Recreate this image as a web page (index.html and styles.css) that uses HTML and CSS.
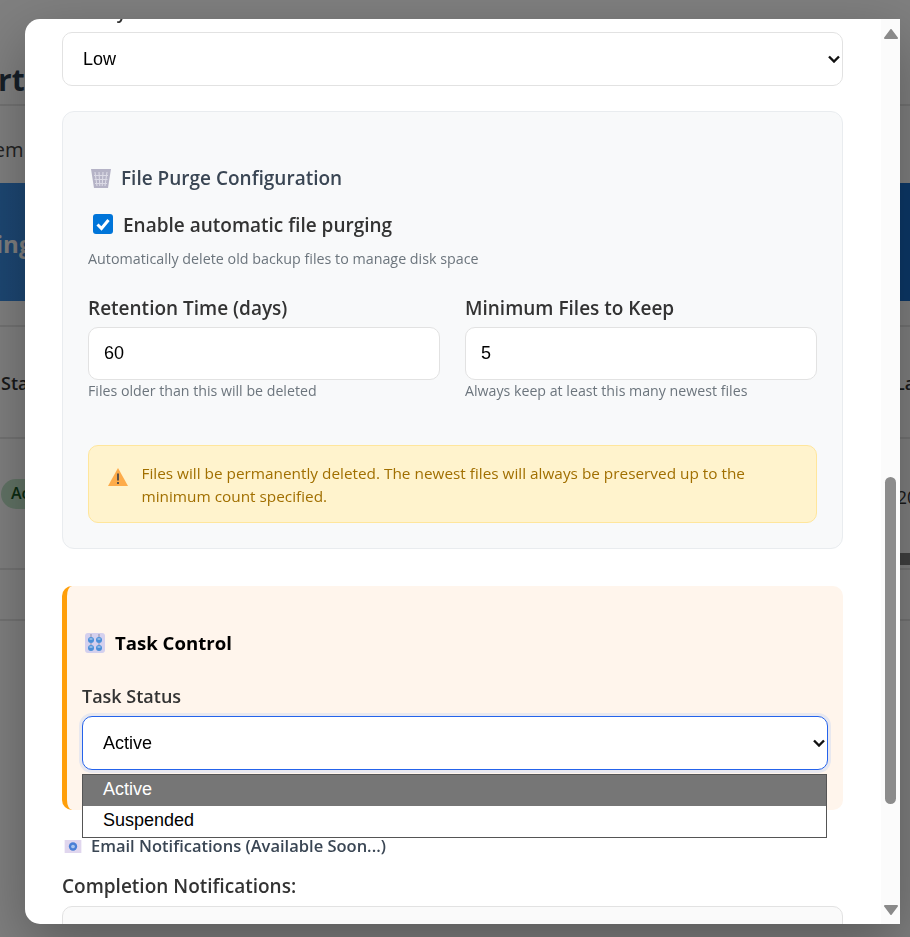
FILE: index.html
```html
<!DOCTYPE html>
<html lang="en">
<head>
    <meta charset="UTF-8">
    <meta name="viewport" content="width=device-width, initial-scale=1.0">
    <title>Task Settings</title>
    <link rel="stylesheet" href="styles.css">
</head>
<body>

    <div class="page">
        <div class="page-head"><h1>Reports</h1></div>
        <div class="page-sub">System</div>
        <div class="banner"><span>Scheduling</span></div>
        <div class="table-head"><span>Status</span><span>Last</span></div>
        <div class="table-row">
            <div class="row-cells"><span class="pill">Active</span><span class="date">2025</span></div>
            <div class="table-bar"></div>
        </div>
        <div class="table-foot"></div>
    </div>

    <div class="overlay"></div>

    <div class="modal">
        <div class="modal-body">
            <label class="field-label clipped">Priority</label>
            <div class="select-box">Low<svg class="chev" viewBox="0 0 12 8"><path d="M1 1.500 6 6.500l5-5" /></svg></div>

            <div class="purge">
                <h4 class="purge-title">
                    <svg class="emoji" viewBox="0 0 20 20">
                        <path d="M0 1h20l-3 19H3z" fill="#b5b3c6"/>
                        <path d="M4 4l2 14M8 4l.8 14M12 4l-.8 14M16 4l-2 14M3 7.500h14M3.500 11.500h13M4 15.500h12" stroke="#dcdbe6" stroke-width="1.1" fill="none"/>
                    </svg>
                    File Purge Configuration
                </h4>
                <div class="check-row">
                    <span class="check"><svg viewBox="0 0 20 20"><path d="M4.500 10.500 8.500 14.500 15.500 6" /></svg></span>
                    <span>Enable automatic file purging</span>
                </div>
                <p class="hint hint-main">Automatically delete old backup files to manage disk space</p>

                <div class="purge-grid">
                    <div>
                        <label class="field-label">Retention Time (days)</label>
                        <div class="input-box">60</div>
                        <p class="hint">Files older than this will be deleted</p>
                    </div>
                    <div>
                        <label class="field-label">Minimum Files to Keep</label>
                        <div class="input-box">5</div>
                        <p class="hint">Always keep at least this many newest files</p>
                    </div>
                </div>

                <div class="warning">
                    <svg class="warn-icon" viewBox="0 0 20 18">
                        <path d="M10 0 20 18H0z" fill="#fdab4a"/>
                        <path d="M10 5.500v7" stroke="#5c5248" stroke-width="2"/>
                        <path d="M10 14v2" stroke="#5c5248" stroke-width="2"/>
                    </svg>
                    <p>Files will be permanently deleted. The newest files will always be preserved up to the minimum count specified.</p>
                </div>
            </div>

            <div class="task-control">
                <h4 class="task-title">
                    <svg class="emoji" viewBox="0 0 20 20">
                        <rect width="20" height="20" rx="3" fill="#d4d0ee"/>
                        <path d="M6 1v3M14 1v3M6 10v2M14 10v2" stroke="#8f8fa8"/>
                        <circle cx="6" cy="7" r="3" fill="#4a8fd8"/><circle cx="14" cy="7" r="3" fill="#4a8fd8"/>
                        <circle cx="6" cy="15" r="3" fill="#4a8fd8"/><circle cx="14" cy="15" r="3" fill="#4a8fd8"/>
                        <path d="M4.500 6h3M12.500 6h3M4.500 14h3M12.500 14h3" stroke="#cfe0f4"/>
                    </svg>
                    Task Control
                </h4>
                <label class="field-label">Task Status</label>
                <div class="select-box focused">Active<svg class="chev" viewBox="0 0 12 8"><path d="M1 1.500 6 6.500l5-5" /></svg></div>
            </div>

            <div class="dropdown">
                <div class="option selected">Active</div>
                <div class="option">Suspended</div>
            </div>

            <div class="email-title">
                <svg class="emoji-small" viewBox="0 0 18 14">
                    <rect width="18" height="14" fill="#e0d6ee"/>
                    <circle cx="9" cy="7" r="4.500" fill="#4a7fd6"/>
                    <circle cx="9" cy="7" r="2" fill="#a9c4ee"/>
                </svg>
                Email Notifications (Available Soon...)
            </div>
            <label class="field-label completion">Completion Notifications:</label>
            <div class="text-box"></div>
        </div>

        <div class="scrollbar">
            <svg class="arrow" viewBox="0 0 14 10"><path d="M7 1 13 9H1z" /></svg>
            <div class="track"><div class="thumb"></div></div>
            <svg class="arrow" viewBox="0 0 14 10"><path d="M1 1H13L7 9z" /></svg>
        </div>
    </div>

</body>
</html>
```

FILE: styles.css
```css
* {
    box-sizing: border-box;
}
html, body {
    margin: 0;
    height: 100%;
    overflow: hidden;
}
body {
    font-family: "Open Sans", "Noto Sans", sans-serif;
    background: #fff;
    color: #2c3e50;
}

/* page behind the dialog */
.page {
    height: 937px;
}
.page-head {
    height: 106px;
    padding: 62px 0 0 0;
    border-bottom: 2px solid #e6e6e6;
}
.page-head h1 {
    margin: 0 0 0 -77px;
    font-size: 30px;
    line-height: 36px;
    color: #2c3e50;
}
.page-sub {
    height: 77px;
    padding-top: 30px;
    margin-left: -44px;
    font-size: 20px;
    color: #444;
}
.banner {
    height: 118px;
    padding-top: 44px;
    background: linear-gradient(90deg, #3a8ee6, #1870d0);
    color: #fff;
    font-size: 24px;
    font-weight: 700;
}
.banner span {
    margin-left: -98px;
}
.table-head {
    height: 114px;
    margin-top: 24px;
    padding-top: 44px;
    border-top: 2px solid #e6e6e6;
    border-bottom: 2px solid #e6e6e6;
    display: flex;
    justify-content: space-between;
    font-size: 18px;
    font-weight: 600;
    color: #333;
}
.table-head span:first-child {
    margin-left: 1px;
}
.table-head span:last-child {
    margin-right: -21px;
}
.table-row {
    height: 131px;
    padding-top: 40px;
    border-bottom: 2px solid #e6e6e6;
}
.row-cells {
    height: 74px;
    display: flex;
    justify-content: space-between;
    align-items: flex-start;
}
.pill {
    margin-left: 1px;
    height: 30px;
    padding: 3px 10px;
    border-radius: 15px;
    background: #c3e6cb;
    color: #155724;
    font-size: 16px;
    font-weight: 600;
}
.date {
    margin-top: 6px;
    margin-right: -28px;
    font-size: 18px;
    color: #333;
}
.table-bar {
    height: 12px;
    margin-left: 50%;
    background: #808080;
}
.table-foot {
    height: 51px;
    border-bottom: 2px solid #e6e6e6;
}
.overlay {
    position: fixed;
    inset: 0;
    background: rgba(0, 0, 0, 0.5);
}

/* dialog */
.modal {
    position: fixed;
    left: 25px;
    top: 19px;
    width: 875px;
    height: 905px;
    display: flex;
    background: #fff;
    border-radius: 15px 0 0 15px;
    box-shadow: 0 20px 60px rgba(0, 0, 0, 0.3);
}
.modal-body {
    position: relative;
    width: 856px;
    padding: 13px 38px 0 37px;
    overflow: hidden;
    flex: none;
    border-radius: 15px 0 0 15px;
}
.field-label {
    display: block;
    margin-bottom: 8px;
    font-size: 18px;
    line-height: 24px;
    font-weight: 600;
    color: #333;
}
.clipped {
    position: absolute;
    top: -19px;
}
.select-box {
    height: 54px;
    padding: 0 15px 0 20px;
    display: flex;
    align-items: center;
    justify-content: space-between;
    border: 1.5px solid #e2e2e2;
    border-radius: 10px;
    background: #fff;
    font-family: "Liberation Sans", Arial, sans-serif;
    font-size: 18px;
    color: #000;
}
.chev {
    width: 12px;
    height: 8px;
    margin-right: -12.500px;
    fill: none;
    stroke: #111;
    stroke-width: 2.4;
}
.focused {
    border: 1.5px solid #2563eb;
    box-shadow: 0 0 0 3px #e8e8ef;
}

/* purge settings */
.purge {
    margin-top: 25px;
    height: 438px;
    padding: 53px 25px 0 25px;
    background: #f8f9fa;
    border: 1.5px solid #e9ecef;
    border-radius: 12px;
}
.purge-title {
    margin: 0;
    display: flex;
    align-items: center;
    gap: 10px;
    padding-left: 3px;
    font-size: 19px;
    line-height: 26px;
    font-weight: 600;
    color: #3a4654;
}
.emoji {
    width: 20px;
    height: 20px;
    flex: none;
}
.check-row {
    margin-top: 21px;
    padding-left: 5px;
    display: flex;
    align-items: center;
    gap: 10px;
    font-size: 19px;
    line-height: 26px;
    font-weight: 600;
    color: #333;
}
.check {
    width: 20px;
    height: 20px;
    margin-top: -2px;
    border-radius: 3px;
    background: #0075d9;
    display: flex;
}
.check svg {
    fill: none;
    stroke: #fff;
    stroke-width: 3;
}
.hint {
    margin: 1px 0 0;
    font-size: 14.200px;
    line-height: 20px;
    color: #6c757d;
}
.hint-main {
    margin-top: 11px;
    font-size: 14.300px;
}
.purge-grid {
    margin-top: 27px;
    display: grid;
    grid-template-columns: 352px 352px;
    gap: 25px;
}
.purge-grid .field-label {
    margin-bottom: 7px;
    font-size: 19px;
}
.input-box {
    height: 53px;
    padding: 0 15px;
    display: flex;
    align-items: center;
    border: 1.5px solid #e2e2e2;
    border-radius: 10px;
    background: #fff;
    font-family: "Liberation Sans", Arial, sans-serif;
    font-size: 18px;
    color: #000;
}
.warning {
    margin-top: 44px;
    height: 78px;
    padding: 16px 19px;
    display: flex;
    gap: 13.500px;
    background: #fff3cd;
    border: 1.5px solid #ffe69c;
    border-radius: 10px;
}
.warn-icon {
    width: 20px;
    height: 18px;
    margin-top: 6px;
    flex: none;
}
.warning p {
    margin: 0;
    font-size: 15.350px;
    line-height: 23px;
    color: #a16f00;
}

/* task control */
.task-control {
    margin-top: 37px;
    height: 224px;
    padding: 44px 15px 0 15px;
    background: #fff5ec;
    border-left: 5px solid #ff9f0a;
    border-radius: 10px;
}
.task-title {
    margin: 0 0 28px;
    display: flex;
    align-items: center;
    gap: 10px;
    padding-left: 3px;
    font-size: 18.600px;
    line-height: 26px;
    font-weight: 700;
    color: #000;
}

/* open list of the status select */
.dropdown {
    position: absolute;
    left: 57px;
    top: 755px;
    width: 745px;
    border: 1px solid #555;
    background: #fff;
    font-family: "Liberation Sans", Arial, sans-serif;
    font-size: 18px;
    color: #000;
}
.option {
    height: 31px;
    padding: 0 20px;
    line-height: 29px;
}
.selected {
    background: #767676;
    color: #fff;
}

.email-title {
    margin-top: 24px;
    display: flex;
    align-items: center;
    gap: 9px;
    padding-left: 2px;
    font-size: 16.500px;
    line-height: 24px;
    font-weight: 600;
    color: #3a4654;
}
.emoji-small {
    width: 18px;
    height: 13px;
}
.completion {
    margin: 16px 0 8px;
    font-size: 19px;
}
.text-box {
    height: 60px;
    border: 1.5px solid #e2e2e2;
    border-radius: 10px;
    background: #fafafa;
}

/* scrollbar */
.scrollbar {
    width: 19px;
    background: #fbfbfb;
    display: flex;
    flex-direction: column;
    align-items: center;
    flex: none;
}
.arrow {
    width: 14px;
    height: 10px;
    margin: 10px 0 9px;
    fill: #8a8a8a;
    stroke: #8a8a8a;
    stroke-width: 2;
    stroke-linejoin: round;
    flex: none;
}
.track {
    flex: 1;
    width: 11px;
}
.thumb {
    width: 11px;
    height: 327px;
    margin-top: 429px;
    border-radius: 6px;
    background: #8c8c8c;
}
```
